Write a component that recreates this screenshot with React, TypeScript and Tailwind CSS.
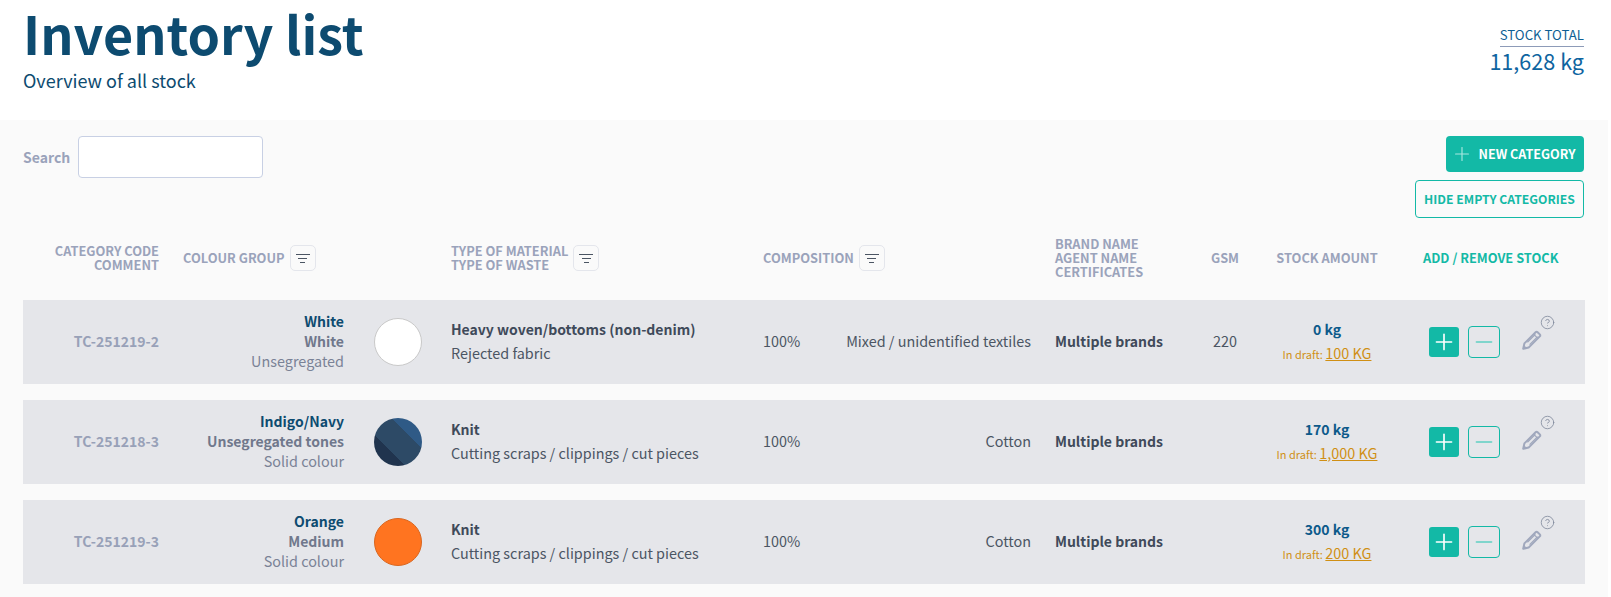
import { CircleHelp, Minus, Plus } from 'lucide-react';

const rows = [
  {
    code: 'TC-251219-2',
    colour: 'White',
    tone: 'White',
    kind: 'Unsegregated',
    swatch: 'bg-white border border-[#c9c9c9]',
    material: 'Heavy woven/bottoms (non-denim)',
    waste: 'Rejected fabric',
    fibre: 'Mixed / unidentified textiles',
    gsm: '220',
    stock: '0 kg',
    draft: '100 KG',
  },
  {
    code: 'TC-251218-3',
    colour: 'Indigo/Navy',
    tone: 'Unsegregated tones',
    kind: 'Solid colour',
    swatch:
      'bg-[linear-gradient(45deg,#20344e_22px,#2d4a66_22px,#2d4a66_46px,#2f5a86_46px)]',
    material: 'Knit',
    waste: 'Cutting scraps / clippings / cut pieces',
    fibre: 'Cotton',
    gsm: '',
    stock: '170 kg',
    draft: '1,000 KG',
  },
  {
    code: 'TC-251219-3',
    colour: 'Orange',
    tone: 'Medium',
    kind: 'Solid colour',
    swatch: 'bg-[#ff7420] border border-[#d9661f]',
    material: 'Knit',
    waste: 'Cutting scraps / clippings / cut pieces',
    fibre: 'Cotton',
    gsm: '',
    stock: '300 kg',
    draft: '200 KG',
  },
];

const gridCols =
  'grid grid-cols-[136px_185px_107px_312px_268px_169px_50px_154px_180px] items-center';

const FilterButton = () => (
  <button className="ml-[5px] flex h-[26px] w-[26px] flex-col items-center justify-center gap-[3px] rounded-[5px] border border-[#e4e6ec] bg-[#fafafa]">
    <span className="h-px w-[14px] bg-[#4b5563]" />
    <span className="h-px w-[9px] bg-[#4b5563]" />
    <span className="h-px w-[5px] bg-[#4b5563]" />
  </button>
);

const PencilIcon = () => (
  <svg viewBox="0 0 20 20" className="h-[20px] w-[20px] text-[#a0a8bd]" fill="none" stroke="currentColor">
    <path d="M1.2 18.8 L2.4 13.4 L13.6 2.2 Q14.6 1.2 15.6 2.2 L17.8 4.4 Q18.8 5.4 17.8 6.4 L6.6 17.6 Z" strokeWidth="2" strokeLinejoin="round" />
    <path d="M11.6 4.2 L15.8 8.4 M5.4 12.2 L13.4 4.4 M7.6 14.6 L15.6 6.6" strokeWidth="1.2" />
    <path d="M1.2 18.8 L2 15.4 L4.6 18 Z" fill="currentColor" strokeWidth="0.5" />
  </svg>
);

export default function App() {
  return (
    <div className="min-h-[597px] w-[1608px] bg-[#fafafa] font-['Noto_Sans_CJK_SC',sans-serif] text-[14.4px]">
      <header className="flex h-[120px] justify-between bg-white pl-[23px] pr-[24px]">
        <div>
          <h1 className="h-[67px] text-[52px] font-bold leading-[65px] text-[#0d4b70]">
            Inventory list
          </h1>
          <p className="text-[18px] leading-[26px] text-[#0d4b70]">Overview of all stock</p>
        </div>
        <div className="pt-[23px] text-right">
          <div className="inline-block border-b border-[#8d9bb8] pb-[2px] text-[13.2px] leading-[18px] text-[#0e5f94]">
            STOCK TOTAL
          </div>
          <div className="text-[21.6px] leading-[28px] text-[#0e64a0]">11,628 kg</div>
        </div>
      </header>

      <div className="flex items-start justify-between pl-[23px] pr-[24px] pt-[16px]">
        <div className="flex items-center gap-[8px]">
          <label className="text-[14px] font-semibold text-[#9aa3bb]">Search</label>
          <input className="h-[42px] w-[185px] rounded-[4px] border border-[#c8d0e4] bg-white" />
        </div>
        <div className="flex flex-col items-end gap-[8px]">
          <button className="flex h-[36px] w-[138px] items-center justify-center gap-[5px] rounded-[4px] bg-[#13b9a6] pr-[3px] text-[12.6px] font-bold text-white">
            <Plus size={22} strokeWidth={1.25} className="text-[#a9e7df]" />
            NEW CATEGORY
          </button>
          <button className="h-[38px] w-[169px] rounded-[4px] border border-[#13b9a6] text-[12.2px] font-semibold text-[#13b9a6]">
            HIDE EMPTY CATEGORIES
          </button>
        </div>
      </div>

      <div className={`${gridCols} mt-[19px] px-[23px] text-[12.8px] font-semibold leading-[14px] text-[#9aa3bb]`}>
        <div className="text-right">
          CATEGORY CODE
          <br />
          COMMENT
        </div>
        <div className="flex items-center pl-[24px]">
          COLOUR GROUP
          <FilterButton />
        </div>
        <div />
        <div className="flex items-center">
          <div>
            TYPE OF MATERIAL
            <br />
            TYPE OF WASTE
          </div>
          <FilterButton />
        </div>
        <div className="flex items-center">
          COMPOSITION
          <FilterButton />
        </div>
        <div className="pl-[24px]">
          BRAND NAME
          <br />
          AGENT NAME
          <br />
          CERTIFICATES
        </div>
        <div className="text-center">GSM</div>
        <div className="text-center">STOCK AMOUNT</div>
        <div className="pl-[19px] text-[#13b9a6]">ADD / REMOVE STOCK</div>
      </div>

      <div className="mt-[21px] flex flex-col gap-[16px] px-[23px]">
        {rows.map((row) => (
          <div key={row.code} className={`${gridCols} h-[84px] bg-[#e5e6ea] pb-[2px]`}>
            <div className="text-right text-[14px] font-semibold text-[#98a1b8]">{row.code}</div>
            <div className="text-right leading-[20px]">
              <div className="text-[14px] font-semibold text-[#0d4b70]">{row.colour}</div>
              <div className="text-[14px] font-semibold text-[#70788c]">{row.tone}</div>
              <div className="text-[#7a8296]">{row.kind}</div>
            </div>
            <div className="pl-[30px] pt-[2px]">
              <div className={`h-[48px] w-[48px] rounded-full ${row.swatch}`} />
            </div>
            <div className="leading-[24px]">
              <div className="text-[14px] font-semibold text-[#3f4a5a]">{row.material}</div>
              <div className="text-[#4b5563]">{row.waste}</div>
            </div>
            <div className="flex justify-between text-[#4b5563]">
              <span>100%</span>
              <span>{row.fibre}</span>
            </div>
            <div className="pl-[24px] text-[14px] font-semibold text-[#3f4a5a]">Multiple brands</div>
            <div className="text-center text-[#4b5563]">{row.gsm}</div>
            <div className="text-center leading-[24px]">
              <div className="text-[14px] font-bold text-[#0d5a8a]">{row.stock}</div>
              <div className="text-[11px] text-[#d08f14]">
                In draft: <span className="text-[14.4px] underline">{row.draft}</span>
              </div>
            </div>
            <div className="flex items-center pl-[25px] pt-[2px]">
              <button className="flex h-[30px] w-[30px] items-center justify-center rounded-[3px] bg-[#13b9a6] text-white">
                <Plus size={26} strokeWidth={1.5} />
              </button>
              <button className="ml-[9px] flex h-[32px] w-[32px] items-center justify-center rounded-[4px] border border-[#13b9a6] text-[#5fd0c2]">
                <Minus size={26} strokeWidth={1.5} />
              </button>
              <div className="relative ml-[22px] h-[20px] w-[20px] -translate-y-[2px]">
                <PencilIcon />
                <CircleHelp
                  size={15}
                  strokeWidth={1.25}
                  className="absolute -top-[15px] left-[18px] text-[#7c8599]"
                />
              </div>
            </div>
          </div>
        ))}
      </div>
    </div>
  );
}
